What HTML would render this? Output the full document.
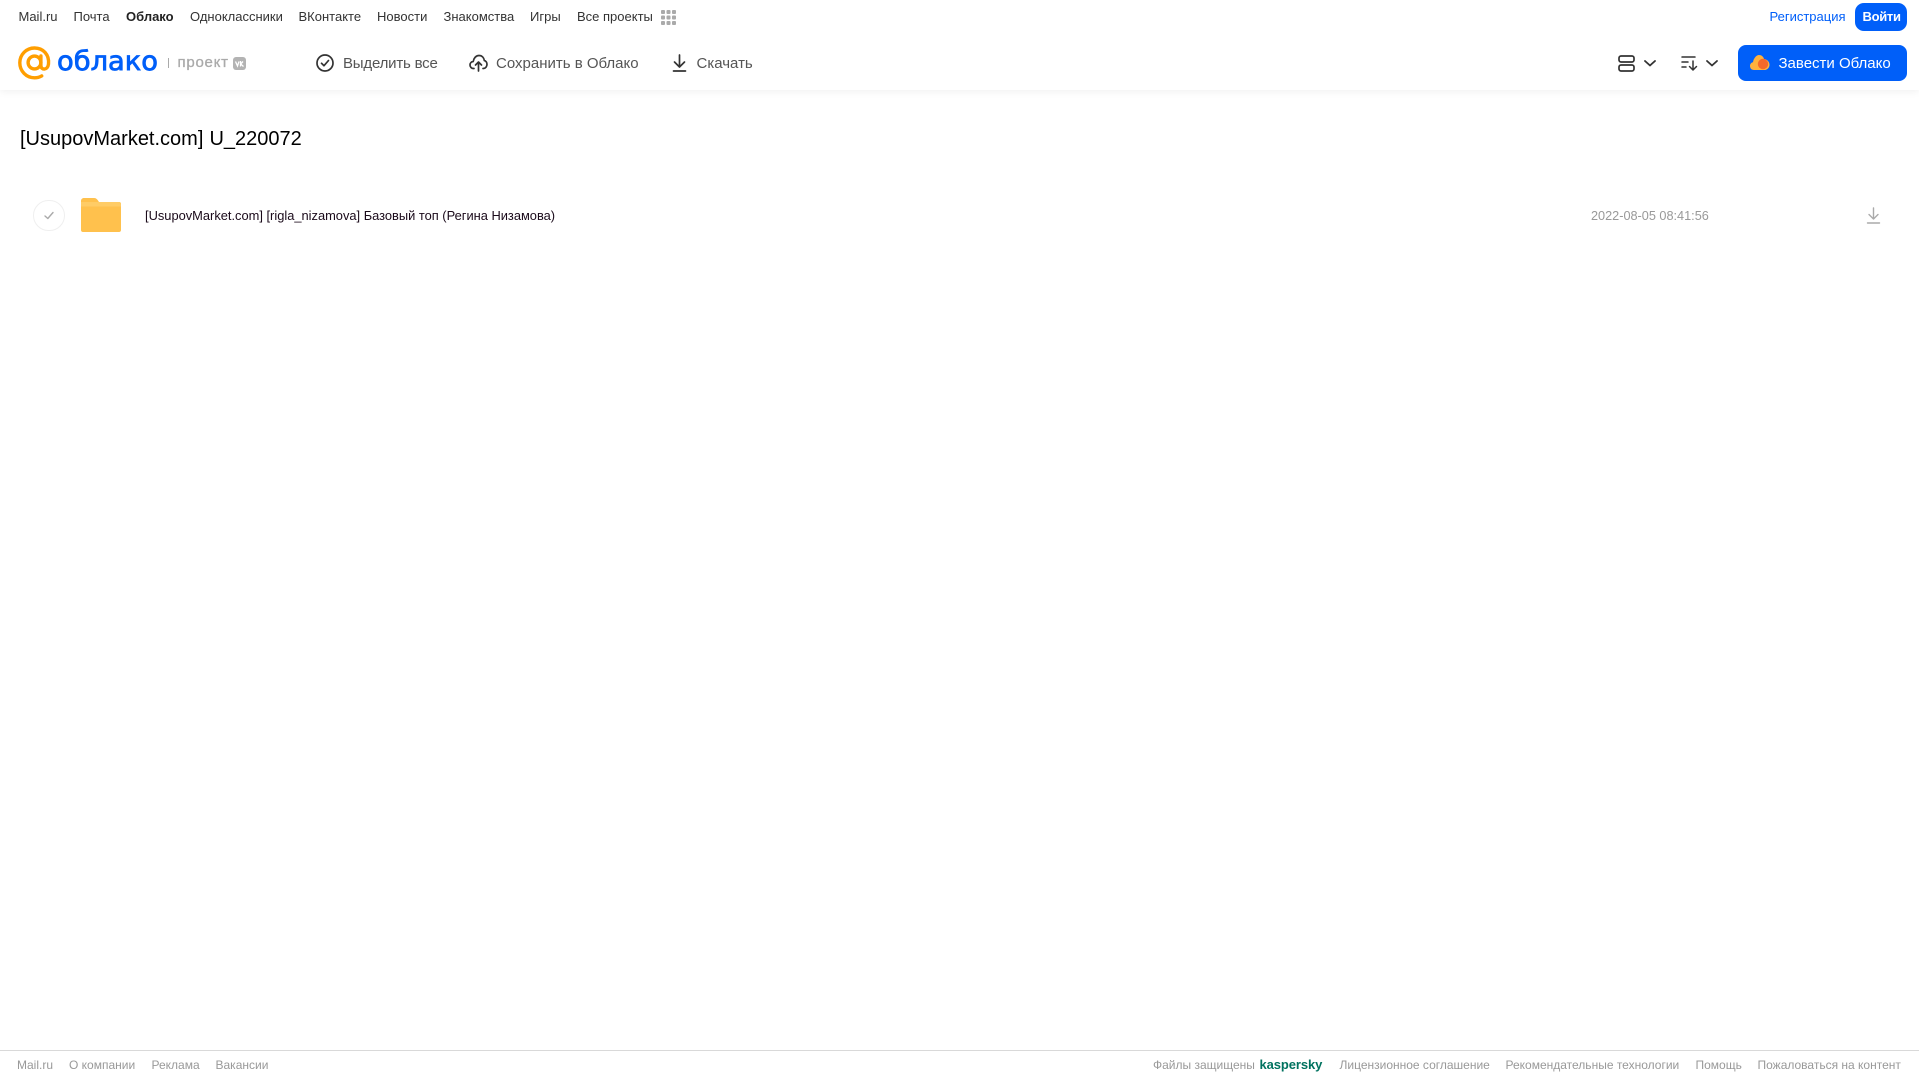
<!DOCTYPE html>
<html lang="ru"><head><meta charset="utf-8"><title>Облако</title>
<style>
html,body{margin:0;padding:0;background:#fff;width:1919px;height:1079px;overflow:hidden;font-family:"Liberation Sans",Arial,sans-serif}
.t{position:absolute;white-space:nowrap;line-height:20px;height:20px}
.n{top:7px;font-size:13px;color:#333}
.b{top:53.5px;font-size:15px;color:#555}
.f{top:1055px;font-size:12px;color:#999}
svg{position:absolute;display:block;overflow:visible}
#hdr{position:absolute;left:0;top:0;width:1919px;height:90px;background:#fff;box-shadow:0 1px 8px rgba(0,0,0,.07)}
#fl{position:absolute;left:0;top:1050px;width:1919px;height:1px;background:#d9d9d9}
</style></head><body>
<div id="hdr"></div>
<span class="t n" style="left:18.5px">Mail.ru</span>
<span class="t n" style="left:73.5px">Почта</span>
<span class="t n" style="left:126px;font-weight:bold;color:#222">Облако</span>
<span class="t n" style="left:190px">Одноклассники</span>
<span class="t n" style="left:298.5px">ВКонтакте</span>
<span class="t n" style="left:377px">Новости</span>
<span class="t n" style="left:443.5px">Знакомства</span>
<span class="t n" style="left:530px">Игры</span>
<span class="t n" style="left:577px">Все проекты</span>
<svg style="left:661px;top:10px" width="15" height="15" fill="#aaa"><rect x="0" y="0" width="4" height="4" rx="1"/><rect x="5.5" y="0" width="4" height="4" rx="1"/><rect x="11" y="0" width="4" height="4" rx="1"/><rect x="0" y="5.5" width="4" height="4" rx="1"/><rect x="5.5" y="5.5" width="4" height="4" rx="1"/><rect x="11" y="5.5" width="4" height="4" rx="1"/><rect x="0" y="11" width="4" height="4" rx="1"/><rect x="5.5" y="11" width="4" height="4" rx="1"/><rect x="11" y="11" width="4" height="4" rx="1"/></svg>

<span class="t n" style="left:1769.5px;color:#005ff9">Регистрация</span>
<div style="position:absolute;left:1855px;top:3px;width:52px;height:28px;border-radius:9px;background:#005ff9"></div>
<span class="t n" style="left:1862.5px;color:#fff;font-weight:bold;letter-spacing:-.3px">Войти</span>

<svg style="left:18px;top:46px" width="34" height="34" viewBox="0 0 34 34" fill="none" stroke="#ff9e00" stroke-width="3.4" stroke-linecap="round"><circle cx="16.5" cy="16.5" r="6.4"/><path d="M22.9 10v9.5c0 5 6.8 5 7.6-1.400C31.500 8.500 25 2 16.500 2 8.300 2 1.800 8.600 1.800 16.800 1.800 25.200 8.300 31.800 16.500 31.800c3 0 5.200-.7 7.200-1.900"/></svg>
<svg style="left:56px;top:42px" width="104" height="40"><text x="1" y="28" font-family="'DejaVu Sans',sans-serif" font-size="27" fill="#005ff9" stroke="#005ff9" stroke-width=".8" textLength="101" lengthAdjust="spacingAndGlyphs">облако</text></svg>
<div style="position:absolute;left:168px;top:58px;width:1px;height:10px;background:#aaa"></div>
<span class="t" style="left:177.500px;top:52.500px;font-size:15px;color:#aaa;letter-spacing:.75px;-webkit-text-stroke:.3px #aaa">проект</span>
<div style="position:absolute;left:232.500px;top:57px;width:13.500px;height:13px;border-radius:3px;background:#b3b3b3"></div>
<svg style="left:235px;top:60.500px" width="9" height="6" fill="none" stroke="#fff" stroke-width="1.300"><path d="M.5 .5 2.500 5 4 .5M5.500 0v5.500M8 .5 5.700 3 8.500 5.500"/></svg>

<svg style="left:316px;top:54px" width="18" height="18" fill="none" stroke="#333" stroke-width="1.700" stroke-linecap="round" stroke-linejoin="round"><circle cx="9" cy="9" r="8"/><path d="M5.500 9.300 8 11.700 12.500 6.500"/></svg>
<span class="t b" style="left:343px;letter-spacing:-.2px">Выделить все</span>
<svg style="left:469px;top:54px" width="19" height="18" fill="none" stroke="#333" stroke-width="1.700" stroke-linecap="round" stroke-linejoin="round"><path d="M5 14.500H4.500C2.500 14.500 1 13 1 11s1.400-3.300 3.200-3.500C4.700 4.200 7 1.500 10 1.500c3 0 5 2.200 5.300 5 1.600.4 2.700 2 2.700 3.800 0 2.300-1.600 4.200-3.800 4.200H14"/><path d="M9.500 17V8.500M6.500 11l3-3 3 3"/></svg>
<span class="t b" style="left:496px">Сохранить в Облако</span>
<svg style="left:671.500px;top:54px" width="15" height="18" fill="none" stroke="#333" stroke-width="1.700" stroke-linecap="round" stroke-linejoin="round"><path d="M7.500 1v11.500M2.500 8l5 5 5-5M1.500 17h12"/></svg>
<span class="t b" style="left:696.500px">Скачать</span>

<svg style="left:1617.500px;top:55px" width="17" height="17" fill="none" stroke="#333" stroke-width="1.700"><rect x="1" y="1" width="15" height="6" rx="2"/><rect x="1" y="10" width="15" height="6" rx="2"/></svg>
<svg style="left:1644px;top:60px" width="12" height="7" fill="none" stroke="#333" stroke-width="1.800" stroke-linecap="round" stroke-linejoin="round"><path d="M1 1l5 4.500L11 1"/></svg>
<svg style="left:1681px;top:55px" width="17" height="16" fill="none" stroke="#333" stroke-width="1.500" stroke-linecap="round" stroke-linejoin="round"><path d="M1 2h13M1 7h6M1 12h4M12 6v9M8.500 11.500 12 15l3.500-3.500"/></svg>
<svg style="left:1706px;top:60px" width="12" height="7" fill="none" stroke="#333" stroke-width="1.800" stroke-linecap="round" stroke-linejoin="round"><path d="M1 1l5 4.500L11 1"/></svg>

<div style="position:absolute;left:1738px;top:45px;width:169px;height:36px;border-radius:8px;background:#005ff9"></div>
<svg style="left:1750px;top:55px" width="20" height="16"><path d="M4 15C1.500 15 0 13.200 0 11c0-2 1.300-3.400 3-3.700C3.500 3.500 6.300 0 9 0c2.500 0 4.500 1.700 5 4 3 .2 5.500 2.800 5.500 5.700 0 3-2.300 5.300-5.200 5.300z" fill="#ffb13d"/><circle cx="13" cy="9" r="5.200" fill="#f5692a"/></svg>
<span class="t" style="left:1778.500px;top:53.500px;font-size:15px;color:#fff">Завести Облако</span>

<div class="t" style="left:20px;top:128px;height:22px;line-height:22px;font-size:20px;color:#000">[UsupovMarket.com]<span style="margin-left:.500px"> U_220072</span></div>

<div style="position:absolute;left:33px;top:199.500px;width:29.500px;height:29.500px;border:1px solid #efefef;border-radius:50%"></div>
<svg style="left:43.500px;top:211px" width="10" height="9" fill="none" stroke="#aaa" stroke-width="1.400" stroke-linecap="round" stroke-linejoin="round"><path d="M1 5 3.800 7.500 9 1.500"/></svg>
<svg style="left:81px;top:198px" width="40" height="34"><path d="M3 0h10c2 0 3 1 4 2.500L18 4H38c1.200 0 2 .8 2 2v26c0 1.200-.8 2-2 2H2c-1.200 0-2-.8-2-2V3C0 1.200 1.200 0 3 0z" fill="#ffc14d"/><path d="M0 8.500h40V6c0-1.200-.8-2-2-2H0z" fill="#ffcc66"/></svg>
<span class="t" style="left:145px;top:206px;font-size:12.870px;color:#1a0a1a">[UsupovMarket.com] [rigla_nizamova] Базовый топ (Регина Низамова)</span>
<span class="t" style="left:1591px;top:206px;font-size:12.700px;color:#999">2022-08-05 08:41:56</span>
<svg style="left:1866.500px;top:207px" width="13" height="17" fill="none" stroke="#aaa" stroke-width="1.400" stroke-linecap="round" stroke-linejoin="round"><path d="M6.500 1v10.500M2 7.500l4.500 4.500L11 7.500M.5 16h12"/></svg>

<div id="fl"></div>
<span class="t f" style="left:17px">Mail.ru</span>
<span class="t f" style="left:69px">О компании</span>
<span class="t f" style="left:151.500px">Реклама</span>
<span class="t f" style="left:215.500px">Вакансии</span>
<span class="t f" style="left:1153px">Файлы защищены</span>
<span class="t f" style="left:1259.500px;font-weight:bold;color:#00725f;font-size:13px;letter-spacing:-.1px">kaspersky</span>
<span class="t f" style="left:1339.500px">Лицензионное соглашение</span>
<span class="t f" style="left:1505.500px">Рекомендательные технологии</span>
<span class="t f" style="left:1695.500px">Помощь</span>
<span class="t f" style="left:1757.500px">Пожаловаться на контент</span>
</body></html>
